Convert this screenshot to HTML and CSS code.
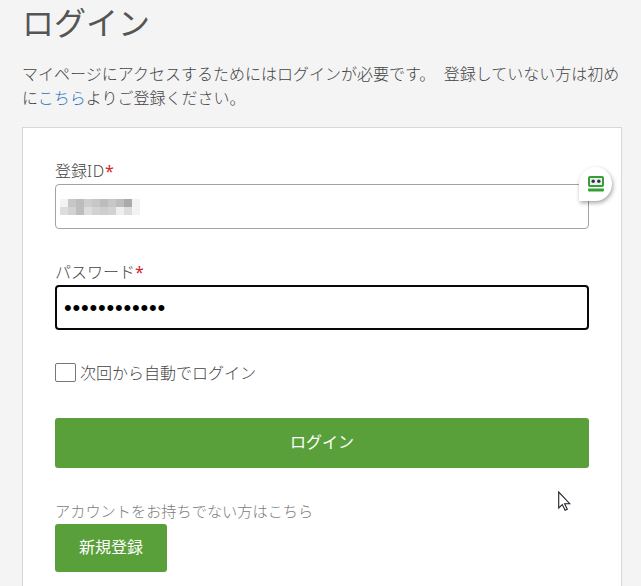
FILE: index.html
```html
<!DOCTYPE html>
<html lang="ja">
<head>
<meta charset="utf-8">
<title>ログイン</title>
<link rel="stylesheet" href="styles.css">
</head>
<body>
<main class="page">
  <h1 class="title">ログイン</h1>
  <p class="lead">マイページにアクセスするためにはログインが必要です。 登録していない方は初めに<a class="link">こちら</a>よりご登録ください。</p>
  <form class="panel">
    <div class="label">登録<span class="latin">ID</span><span class="req">*</span></div>
    <div class="field">
      <svg class="mask" width="80" height="16" viewBox="0 0 10 2" shape-rendering="crispEdges">
        <path fill="#f3f3f3" d="M0 0h1v1H0zM9 0h1v2H9z"/>
        <path fill="#c7c7c7" d="M1 0h1v1H1zM4 0h1v1H4zM6 0h1v1H6z"/>
        <path fill="#bdbdbd" d="M2 0h1v1H2zM5 0h1v1H5zM2 1h1v1H2zM7 0h1v1H7z"/>
        <path fill="#cecece" d="M3 0h1v1H3zM5 1h1v1H5z"/>
        <path fill="#aaa" d="M8 0h1v1H8z"/>
        <path fill="#ddd" d="M0 1h1v1H0zM3 1h1v1H3zM8 1h1v1H8z"/>
        <path fill="#d2d2d2" d="M1 1h1v1H1zM4 1h1v1H4zM6 1h1v1H6z"/>
        <path fill="#eee" d="M7 1h1v1H7z"/>
      </svg>
      <span class="bubble">
        <svg width="16" height="16" viewBox="0 0 16 16">
          <rect x="1" y="1" width="14" height="9" rx="1" fill="#e9eef0" stroke="#35a035" stroke-width="2"/>
          <circle cx="5.2" cy="5.3" r="1.7" fill="#30343c"/>
          <circle cx="10.8" cy="5.3" r="1.7" fill="#30343c"/>
          <rect x="0" y="12.6" width="16" height="2.8" rx=".8" fill="#35a035"/>
        </svg>
      </span>
    </div>
    <div class="label second">パスワード<span class="req">*</span></div>
    <div class="field focused"><span class="dots">••••••••••••</span></div>
    <div class="remember"><span class="box"></span><span>次回から自動でログイン</span></div>
    <div class="button wide">ログイン</div>
    <div class="note">アカウントをお持ちでない方はこちら</div>
    <div class="button small">新規登録</div>
  </form>
</main>
<svg class="cursor" width="13" height="20" viewBox="0 0 13 20">
  <path d="M.7 1v16l3.6-3.4 2.8 5.6 2.2-1-2.7-5.5h5.2z" fill="#fff" stroke="#20202a" stroke-width="1.1"/>
</svg>
</body>
</html>
```
FILE: styles.css
```css
* { box-sizing: border-box; }
body {
  margin: 0;
  height: 586px;
  overflow: hidden;
  position: relative;
  background: #f4f4f4;
  color: #444;
  font: 300 16px/24px "Noto Sans CJK JP", sans-serif;
}
.page { width: 622px; padding: 0 0 0 22px; }
.title { margin: 0; padding-top: 1px; height: 61px; font-size: 32px; line-height: 40px; font-weight: 400; color: #555; }
.lead { margin: 0; height: 66px; width: 604px; word-spacing: 5px; }
.link { color: #1a75bb; }
.panel {
  height: 480px;
  padding: 30px 32px 0;
  background: #fff;
  border: 1px solid #d8d8d8;
}
.label { height: 26px; line-height: 24px; }
.second { margin-top: 30px; }
.latin { font-family: "Noto Sans", sans-serif; letter-spacing: .8px; }
.req { color: #d9222a; font-family: "Noto Sans", sans-serif; font-weight: 400; }
.field {
  position: relative;
  display: flex;
  align-items: center;
  height: 45px;
  padding-left: 5px;
  border: 1px solid #a3a3a3;
  border-radius: 4px;
  background: #fff;
}
.focused { border: 2px solid #080808; padding-left: 7px; }
.mask { margin-left: -1px; }
.bubble {
  position: absolute;
  right: -24px;
  top: -18px;
  width: 33px;
  height: 34px;
  display: flex;
  align-items: center;
  justify-content: center;
  background: #fff;
  border-radius: 50% 50% 50% 0;
  box-shadow: 1px 2px 4px rgba(0, 0, 0, .35);
}
.dots { color: #000; font-family: "Liberation Sans", sans-serif; font-size: 22px; letter-spacing: .8px; }
.remember { display: flex; gap: 4px; height: 24px; margin-top: 30px; }
.box { width: 21px; height: 19px; margin-top: 3px; border: 1px solid #777; border-radius: 2px; }
.button { background: #5aa03a; color: #fff; text-align: center; border-radius: 3px; font-weight: 400; }
.wide { margin-top: 34px; height: 50px; line-height: 46px; }
.note { margin-top: 30px; height: 26px; line-height: 24px; font-size: 15.2px; color: #7c7c7c; }
.small { width: 112px; height: 48px; line-height: 45px; }
.cursor { position: absolute; left: 558px; top: 491px; }
```
